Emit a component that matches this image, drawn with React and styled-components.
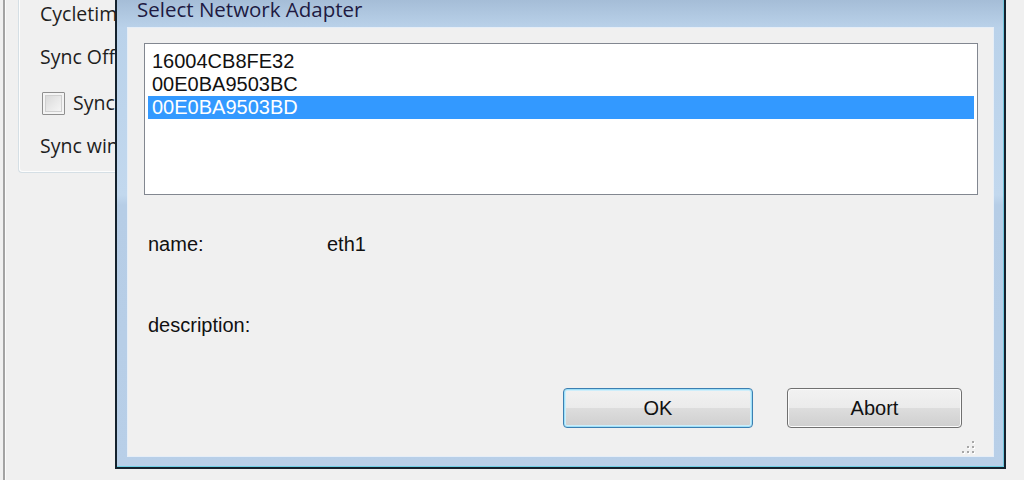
import React from 'react'
import styled, { createGlobalStyle } from 'styled-components'

const GlobalStyle = createGlobalStyle`
  html, body {
    margin: 0;
    padding: 0;
    background: #f0f0f0;
    overflow: hidden;
  }
`

const Screen = styled.div`
  position: relative;
  width: 1024px;
  height: 480px;
  overflow: hidden;
  background: #f0f0f0;
  display: flex;
  align-items: flex-start;
`

// parent window behind the dialog
const WindowEdge = styled.div`
  width: 2px;
  height: 480px;
  margin-left: 3px;
  background: #a3a3a3;
  box-shadow: 1px 0 0 #fbfbfb;
`

// only the part left of the dialog is visible
const GroupBox = styled.div`
  margin-left: 13px;
  width: 97px;
  height: 173px;
  overflow: hidden;
  padding: 1px 0 0 21px;
  box-sizing: border-box;
  border-left: 1px solid #d5dfe5;
  border-bottom: 1px solid #d5dfe5;
  border-bottom-left-radius: 4px;
  box-shadow: inset 1px -1px 0 #fdfdfd;
  font-family: "Open Sans", "Noto Sans", sans-serif;
  font-size: 19.5px;
  color: #1e1e1e;
`

const Field = styled.div`
  display: flex;
  align-items: center;
  gap: 8px;
  height: 26px;
  line-height: 26px;
  margin-top: ${p => p.$gap || 0}px;
  white-space: nowrap;
`

const CheckBox = styled.span`
  flex: none;
  display: inline-block;
  width: 21px;
  height: 21px;
  margin-left: 2px;
  border: 1px solid #8f8f8f;
  border-radius: 1px;
  background: linear-gradient(135deg, #d4d4d4 0%, #e8e8e8 50%, #fafafa 100%);
  box-shadow: inset 0 0 0 2px #f4f4f4, inset 0 0 0 3px #cfcfcf;
`

// dialog window
const Dialog = styled.div`
  position: absolute;
  left: 115px;
  top: 0;
  width: 891px;
  height: 469px;
  box-sizing: border-box;
  border: 2px solid #14222e;
  border-top: none;
  padding: 0 11px 11px 11px;
  background: linear-gradient(to bottom, #a5bdd7 0px, #bad2ea 28px, #c2d8ee 195px, #b6cde6 205px, #b8cfe8 100%);
  box-shadow: inset 0 -1px 0 #6fd0e6, inset -1px 0 0 #6fc4dc;
  display: flex;
  flex-direction: column;
`

const TitleBar = styled.div`
  height: 28px;
  padding: 0 0 0 9px;
  box-sizing: border-box;
  font-family: "Open Sans", "Noto Sans", sans-serif;
  font-size: 20.5px;
  line-height: 19px;
  color: #201a42;
  white-space: nowrap;
`

const Client = styled.div`
  flex: 1;
  background: #f0f0f0;
  box-shadow: 0 0 0 1px #e6eef7;
  padding: 15px 15px 0 16px;
  display: flex;
  flex-direction: column;
  font-family: "Liberation Sans", Arial, sans-serif;
  font-size: 20px;
  color: #111;
`

const ListBox = styled.div`
  height: 152px;
  box-sizing: border-box;
  border: 1px solid #828790;
  background: #fff;
  padding: 6px 3px;
`

const ListItem = styled.div`
  height: 23px;
  line-height: 23px;
  padding-left: 4px;
  background: ${p => (p.$selected ? '#3399ff' : 'transparent')};
  color: ${p => (p.$selected ? '#fff' : '#111')};
  white-space: nowrap;
`

const InfoGrid = styled.div`
  display: grid;
  grid-template-columns: 179px 1fr;
  grid-auto-rows: 23px;
  row-gap: 58px;
  margin-top: 38px;
  padding-left: 4px;
  line-height: 23px;
`

const ButtonRow = styled.div`
  display: flex;
  justify-content: flex-end;
  gap: 34px;
  margin-top: 51px;
  padding-right: 16px;
`

const Button = styled.button`
  width: ${p => p.$w}px;
  height: 40px;
  box-sizing: border-box;
  border-radius: 4px;
  font-family: "Liberation Sans", Arial, sans-serif;
  font-size: 20px;
  color: #111;
  padding: 0;
  border: 1px solid ${p => (p.$default ? '#3c7fb1' : '#707070')};
  background: linear-gradient(to bottom, #f2f2f2 0%, #ebebeb 50%, #dddddd 51%, #cfcfcf 100%);
  box-shadow: ${p =>
    p.$default
      ? 'inset 0 0 0 1px #9fe0f8, inset 0 0 0 2px #cdeefb'
      : 'inset 0 0 0 1px #fbfbfb'};
`

const Grip = styled.svg`
  align-self: flex-end;
  margin: auto 2px 2px 0;
  display: block;
`

const macs = ['16004CB8FE32', '00E0BA9503BC', '00E0BA9503BD']

const gripDots = [
  [11, 2],
  [6, 7], [11, 7],
  [1, 12], [6, 12], [11, 12],
]

export default function App() {
  return (
    <>
      <GlobalStyle />
      <Screen>
        <WindowEdge />
        <GroupBox>
          <Field>Cycletime</Field>
          <Field $gap={17}>Sync Offset</Field>
          <Field $gap={20}>
            <CheckBox />
            <span>Sync enabled</span>
          </Field>
          <Field $gap={17}>Sync window</Field>
        </GroupBox>

        <Dialog>
          <TitleBar>Select Network Adapter</TitleBar>
          <Client>
            <ListBox>
              {macs.map((m, i) => (
                <ListItem key={m} $selected={i === 2}>{m}</ListItem>
              ))}
            </ListBox>

            <InfoGrid>
              <span>name:</span>
              <span>eth1</span>
              <span>description:</span>
              <span></span>
            </InfoGrid>

            <ButtonRow>
              <Button $w={190} $default>OK</Button>
              <Button $w={175}>Abort</Button>
            </ButtonRow>

            <Grip width="15" height="15" viewBox="0 0 15 15">
              {gripDots.map(([x, y]) => (
                <g key={`${x}-${y}`}>
                  <rect x={x + 1} y={y + 1} width="2" height="2" fill="#ffffff" />
                  <rect x={x} y={y} width="2" height="2" fill="#a7a7a7" />
                </g>
              ))}
            </Grip>
          </Client>
        </Dialog>
      </Screen>
    </>
  )
}
